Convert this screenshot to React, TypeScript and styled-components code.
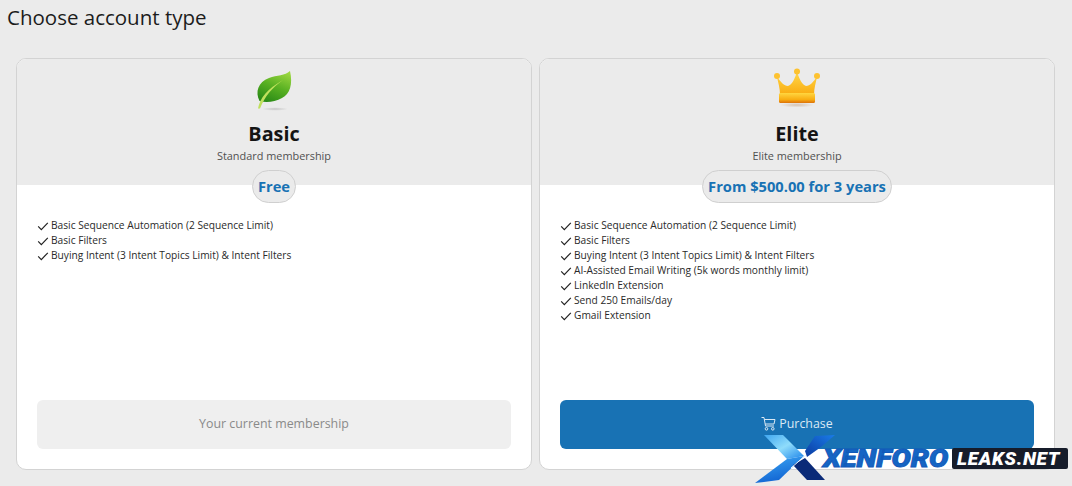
import React from "react";
import styled, { createGlobalStyle } from "styled-components";

const Global = createGlobalStyle`
  html, body { margin: 0; padding: 0; background: #ebebeb; }
  body { font-family: "Open Sans", "Noto Sans", "Liberation Sans", sans-serif; width: 1072px; height: 486px; overflow: hidden; }
`;

const Page = styled.div`
  position: relative;
  width: 1072px;
  height: 486px;
  padding: 4px 17px 0 16px;
  box-sizing: border-box;
  overflow: hidden;
`;

const Title = styled.h1`
  margin: 0 0 0 -9px;
  height: 54px;
  font-size: 20.5px;
  line-height: 27px;
  font-weight: 400;
  color: #1c1c1c;
`;

const Cards = styled.div`
  display: grid;
  grid-template-columns: 516px 516px;
  gap: 7px;
`;

const Card = styled.section`
  height: 412px;
  box-sizing: border-box;
  border: 1px solid #d3d3d3;
  border-radius: 10px;
  background: #fff;
  overflow: hidden;
  display: flex;
  flex-direction: column;
`;

const Head = styled.header`
  height: 126px;
  flex: none;
  background: #ebebeb;
  display: flex;
  flex-direction: column;
  align-items: center;
  padding-top: 9px;
  box-sizing: border-box;
`;

const IconWrap = styled.div`
  width: 48px;
  height: 48px;
  flex: none;
`;

const Name = styled.div`
  margin-top: 4px;
  font-size: 19.8px;
  line-height: 27px;
  font-weight: 700;
  color: #141414;
`;

const Sub = styled.div`
  font-size: 10.9px;
  line-height: 17px;
  color: #505050;
`;

const Price = styled.div`
  align-self: center;
  margin-top: -15px;
  height: 33px;
  box-sizing: border-box;
  padding: 0 5px 2px;
  display: flex;
  align-items: center;
  border: 1px solid #cfcfcf;
  border-radius: 17px;
  background: #ebebeb;
  font-size: 14.7px;
  font-weight: 700;
  color: #1872b4;
  position: relative;
`;

const Features = styled.ul`
  list-style: none;
  margin: 15px 0 0;
  padding: 0 20px;
  flex: 1;
`;

const Feature = styled.li`
  display: flex;
  align-items: center;
  gap: 2px;
  height: 15px;
  font-size: 10.2px;
  line-height: 15px;
  color: #2a2a2a;
  white-space: nowrap;
`;

const Action = styled.button<{ $primary?: boolean }>`
  margin: 0 20px 20px;
  height: 49px;
  flex: none;
  border: 0;
  border-radius: 6px;
  padding: 0 0 2px;
  display: flex;
  align-items: center;
  justify-content: center;
  gap: 3px;
  font-family: inherit;
  font-size: 12.4px;
  background: ${(p) => (p.$primary ? "#1872b4" : "#efefef")};
  color: ${(p) => (p.$primary ? "#dbe9f4" : "#8a8a8a")};
`;

const Mark = styled.div`
  position: absolute;
  left: 750px;
  top: 430px;
  width: 320px;
  height: 56px;
`;

const MarkWords = styled.div`
  position: absolute;
  left: 73px;
  top: 18px;
  display: flex;
  align-items: center;
  height: 21px;
  white-space: nowrap;
  font-family: Roboto, "Liberation Sans", sans-serif;
  font-style: italic;
  font-weight: 900;
`;

const MarkBlue = styled.span`
  width: 129px;
  flex: none;
  font-size: 25.5px;
  line-height: 21px;
  color: #1565c4;
  -webkit-text-stroke: 0.9px #1259b8;
  transform: scaleX(1.13);
  transform-origin: left center;
`;

const MarkDark = styled.span`
  width: 116px;
  height: 21px;
  flex: none;
  box-sizing: border-box;
  padding-left: 5px;
  line-height: 21px;
  font-size: 19px;
  letter-spacing: 0.7px;
  background: #161c2a;
  color: #fff;
  border-radius: 2px;
  position: relative;
`;

const Check = () => (
  <svg width="12" height="12" viewBox="0 0 12 12" fill="none" style={{ flex: "none" }}>
    <path d="M1.2 6.4 L4.3 9.6 L10.8 2.8" stroke="#222" strokeWidth="1.2" />
  </svg>
);

const Leaf = () => (
  <svg width="48" height="48" viewBox="0 0 48 48">
    <defs>
      <linearGradient id="lf" x1="0.75" y1="0" x2="0.3" y2="1">
        <stop offset="0" stopColor="#9ad63f" />
        <stop offset="0.5" stopColor="#58b022" />
        <stop offset="1" stopColor="#2a8a16" />
      </linearGradient>
      <radialGradient id="ls">
        <stop offset="0" stopColor="#aaa" stopOpacity="0.6" />
        <stop offset="1" stopColor="#aaa" stopOpacity="0" />
      </radialGradient>
    </defs>
    <ellipse cx="25" cy="41" rx="13" ry="1.8" fill="url(#ls)" />
    <path d="M9.5 33 C5 24 8 14 19 10 C27 7 35 8 40 3 C43 16 40 26 32 30 C25 34 16 35 9.5 33 Z" fill="url(#lf)" />
    <path d="M8 40.5 C10 30 17 21 33 12 C22 20 15 28 10 40.5 Z" fill="#bfe05c" />
  </svg>
);

const Crown = () => (
  <svg width="48" height="48" viewBox="0 0 48 48">
    <defs>
      <linearGradient id="cg" x1="0" y1="0" x2="0" y2="1">
        <stop offset="0" stopColor="#ffd84a" />
        <stop offset="1" stopColor="#f9ab10" />
      </linearGradient>
      <linearGradient id="cb" x1="0" y1="0" x2="0" y2="1">
        <stop offset="0" stopColor="#ffd640" />
        <stop offset="0.65" stopColor="#f9ad12" />
        <stop offset="1" stopColor="#dc7208" />
      </linearGradient>
      <radialGradient id="cs">
        <stop offset="0" stopColor="#c9a88a" stopOpacity="0.6" />
        <stop offset="1" stopColor="#c9a88a" stopOpacity="0" />
      </radialGradient>
    </defs>
    <ellipse cx="24" cy="37" rx="17" ry="2.5" fill="url(#cs)" />
    <path d="M7 27 C7 20 5 14 4 9 C8 14 11 18 15 18 C19 17 22 10 24 4 C26 10 29 17 33 18 C37 18 40 14 44 9 C43 14 41 20 41 27 Z" fill="url(#cg)" />
    <circle cx="4" cy="8" r="3" fill="#fdc230" />
    <circle cx="24" cy="3.5" r="3" fill="#fdc230" />
    <circle cx="44" cy="8" r="3" fill="#fdc230" />
    <rect x="6" y="25" width="36" height="10" rx="1.5" fill="url(#cb)" />
  </svg>
);

const CartIcon = () => (
  <svg width="15" height="15" viewBox="0 0 15 15" fill="none" stroke="#dbe9f4" strokeWidth="1">
    <path d="M0.5 1.5 H3 L4.5 10 H13 M3.3 3.5 H14 L13 8 H4.2" />
    <circle cx="5.5" cy="12.8" r="1.3" />
    <circle cx="11.8" cy="12.8" r="1.3" />
  </svg>
);

const XLogo = () => (
  <svg width="110" height="56" viewBox="0 0 110 56">
    <defs>
      <linearGradient id="x1" x1="0" y1="0" x2="1" y2="1">
        <stop offset="0" stopColor="#3fa6f0" />
        <stop offset="0.5" stopColor="#8fdcfb" />
        <stop offset="1" stopColor="#1c84ea" />
      </linearGradient>
      <linearGradient id="x2" x1="0.2" y1="0" x2="0.6" y2="1">
        <stop offset="0" stopColor="#3aa4f2" />
        <stop offset="1" stopColor="#0e5fd0" />
      </linearGradient>
      <linearGradient id="x3" x1="1" y1="0" x2="0" y2="1">
        <stop offset="0" stopColor="#1a7ce8" />
        <stop offset="1" stopColor="#0b3aa0" />
      </linearGradient>
    </defs>
    <path d="M14 5 L33 5 L54 26 L37 29 Z" fill="url(#x1)" />
    <path d="M37 29 L54 26 L29 50 L5 53 Z" fill="url(#x2)" />
    <path d="M55 21 L65 6 L85 5 L71 17 L57 27 Z" fill="url(#x3)" />
    <path d="M55 28 L75 50 L57 50 L43 35 Z" fill="#0a2a78" />
    <path d="M41 38 L56 25" stroke="#e8f4ff" strokeWidth="1" />
  </svg>
);

const basic = [
  "Basic Sequence Automation (2 Sequence Limit)",
  "Basic Filters",
  "Buying Intent (3 Intent Topics Limit) & Intent Filters",
];

const elite = [
  ...basic,
  "AI-Assisted Email Writing (5k words monthly limit)",
  "LinkedIn Extension",
  "Send 250 Emails/day",
  "Gmail Extension",
];

const Plan = ({
  icon,
  name,
  sub,
  price,
  items,
  children,
}: {
  icon: React.ReactNode;
  name: string;
  sub: string;
  price: string;
  items: string[];
  children: React.ReactNode;
}) => (
  <Card>
    <Head>
      <IconWrap>{icon}</IconWrap>
      <Name>{name}</Name>
      <Sub>{sub}</Sub>
    </Head>
    <Price>{price}</Price>
    <Features>
      {items.map((t) => (
        <Feature key={t}>
          <Check />
          {t}
        </Feature>
      ))}
    </Features>
    {children}
  </Card>
);

export default function App() {
  return (
    <Page>
      <Global />
      <Title>Choose account type</Title>
      <Cards>
        <Plan icon={<Leaf />} name="Basic" sub="Standard membership" price="Free" items={basic}>
          <Action>Your current membership</Action>
        </Plan>
        <Plan icon={<Crown />} name="Elite" sub="Elite membership" price="From $500.00 for 3 years" items={elite}>
          <Action $primary>
            <CartIcon />
            Purchase
          </Action>
        </Plan>
      </Cards>
      <Mark>
        <XLogo />
        <MarkWords>
          <MarkBlue>XENFORO</MarkBlue>
          <MarkDark>LEAKS.NET</MarkDark>
        </MarkWords>
      </Mark>
    </Page>
  );
}
